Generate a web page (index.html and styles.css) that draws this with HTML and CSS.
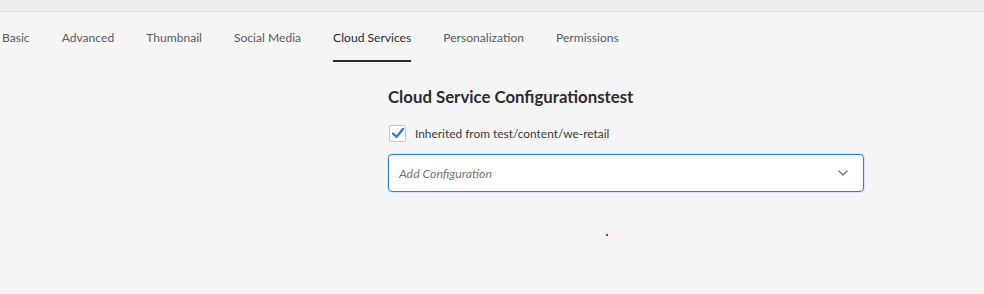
FILE: index.html
```html
<!DOCTYPE html>
<html lang="en">
<head>
<meta charset="utf-8">
<title>Cloud Services</title>
<link rel="stylesheet" href="styles.css">
</head>
<body>
<div class="topbar"></div>
<nav class="tabs">
  <span class="tab">Basic</span>
  <span class="tab">Advanced</span>
  <span class="tab">Thumbnail</span>
  <span class="tab">Social Media</span>
  <span class="tab active">Cloud Services</span>
  <span class="tab">Personalization</span>
  <span class="tab">Permissions</span>
</nav>
<main class="layout">
  <section class="form">
    <h2 class="title">Cloud Service Configurationstest</h2>
    <label class="check">
      <span class="box">
        <svg width="14" height="12" viewBox="0 0 14 12"><path d="M2 6.5 L5.5 10 L12 2" fill="none" stroke="#2d7fd8" stroke-width="2.4" stroke-linecap="round" stroke-linejoin="round"/></svg>
      </span>
      <span class="label">Inherited from test/content/we-retail</span>
    </label>
    <div class="select">
      <span class="placeholder">Add Configuration</span>
      <svg class="chev" width="10" height="6" viewBox="0 0 10 6"><path d="M1 1 L5 5 L9 1" fill="none" stroke="#6e6e6e" stroke-width="1.3" stroke-linecap="round" stroke-linejoin="round"/></svg>
    </div>
    <div class="dotrow"><span class="dot"></span></div>
  </section>
</main>
</body>
</html>
```
FILE: styles.css
```css
html, body {
  margin: 0;
  padding: 0;
}
body {
  background: #f5f5f5;
  font-family: "Lato", "Open Sans", sans-serif;
  color: #4b4b4b;
  width: 984px;
  height: 294px;
  overflow: hidden;
}
.topbar {
  height: 11px;
  background: #eeeeee;
  border-bottom: 1px solid #dedede;
}
.tabs {
  display: flex;
  gap: 32px;
  padding-left: 2px;
  height: 50px;
}
.tab {
  font-size: 12.1px;
  line-height: 18px;
  padding-top: 17px;
  color: #5a5a5a;
  box-sizing: border-box;
  height: 50px;
  border-bottom: 2px solid transparent;
  white-space: nowrap;
}
.tab.active {
  color: #2c2c2c;
  border-bottom-color: #2c2c2c;
}
.layout {
  display: grid;
  grid-template-columns: 388px 476px;
}
.form {
  grid-column: 2;
  padding-top: 24px;
}
.title {
  margin: 0;
  font-size: 16.8px;
  font-weight: 700;
  line-height: 22px;
  color: #2c2c2c;
}
.check {
  display: flex;
  align-items: center;
  gap: 9px;
  margin-top: 16px;
  height: 18px;
}
.box {
  width: 15px;
  height: 15px;
  border: 1px solid #c8c8c8;
  border-radius: 2px;
  background: #ffffff;
  display: flex;
  align-items: center;
  justify-content: center;
  margin-left: 1px;
}
.label {
  font-size: 11.9px;
  color: #3a3a3a;
}
.select {
  margin-top: 12px;
  height: 38px;
  box-sizing: border-box;
  background: #ffffff;
  border: 1px solid #2680eb;
  border-radius: 4px;
  box-shadow: 0 0 0 1px rgba(38,128,235,0.15);
  display: flex;
  align-items: center;
  justify-content: space-between;
  padding: 0 15px 0 10px;
}
.placeholder {
  font-size: 12.3px;
  font-style: italic;
  color: #757575;
}
.dotrow {
  position: relative;
  height: 40px;
}
.dot {
  position: absolute;
  left: 218px;
  top: 42px;
  width: 2px;
  height: 2px;
  background: #e02020;
}
```
